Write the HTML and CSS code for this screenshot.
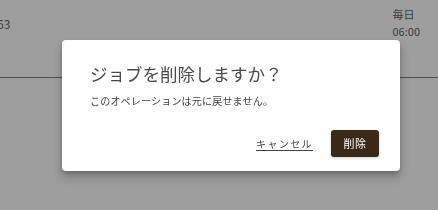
FILE: index.html
```html
<!DOCTYPE html>
<html lang="ja">
<head>
    <meta charset="UTF-8">
    <meta name="viewport" content="width=device-width, initial-scale=1.0">
    <title>ジョブ一覧</title>
    <link rel="stylesheet" href="styles.css">
</head>
<body>

<div class="job-row">
    <div class="cell cell-id">63</div>
    <div class="cell cell-schedule">
        <span>毎日</span>
        <span>06:00</span>
    </div>
</div>

<div class="overlay">
    <div class="dialog">
        <h2 class="dialog-title">ジョブを削除しますか？</h2>
        <p class="dialog-text">このオペレーションは元に戻せません。</p>
        <div class="dialog-actions">
            <button class="btn-link">キャンセル</button>
            <button class="btn-danger">削除</button>
        </div>
    </div>
</div>

</body>
</html>
```

FILE: styles.css
```css
body {
    font-family: "Noto Sans CJK JP", "Noto Sans", sans-serif;
    margin: 0;
    padding: 0;
    background-color: #9e9e9e;
    height: 210px;
    overflow: hidden;
}
.job-row {
    display: flex;
    justify-content: space-between;
    height: 77px;
    border-bottom: 1px solid #505050;
    color: #3c3c3c;
    font-size: 11px;
}
.cell-id {
    margin-left: -3px;
    padding-top: 15px;
    font-size: 12px;
}
.cell-schedule {
    display: flex;
    flex-direction: column;
    gap: 1px;
    padding-top: 6px;
    padding-right: 18px;
    line-height: 16px;
}
.overlay {
    position: fixed;
    top: 0;
    left: 0;
    width: 100%;
    height: 100%;
    display: flex;
    align-items: center;
    justify-content: center;
    padding-left: 24px;
    box-sizing: border-box;
}
.dialog {
    width: 338px;
    height: 131px;
    box-sizing: border-box;
    background-color: #fff;
    border-radius: 4px;
    box-shadow: 0 6px 10px rgba(0, 0, 0, 0.25), 0 2px 4px rgba(0, 0, 0, 0.15);
    padding: 22px 21px 14px 28px;
    display: flex;
    flex-direction: column;
}
.dialog-title {
    margin: 0;
    font-size: 17.5px;
    font-weight: 400;
    line-height: 24px;
    color: #4a4a4a;
}
.dialog-text {
    margin: 7px 0 0;
    font-size: 10px;
    letter-spacing: 0.2px;
    line-height: 16px;
    color: #444;
}
.dialog-actions {
    margin-top: auto;
    display: flex;
    justify-content: flex-end;
    align-items: center;
    gap: 18px;
}
.btn-link {
    font-family: inherit;
    background: none;
    border: none;
    padding: 0;
    font-size: 10px;
    letter-spacing: 1.4px;
    color: #444;
    text-decoration: underline;
    text-underline-offset: 2px;
    cursor: pointer;
}
.btn-danger {
    font-family: inherit;
    width: 48px;
    height: 27px;
    border: none;
    border-radius: 3px;
    background-color: #3b2816;
    color: #fff;
    font-size: 11px;
    letter-spacing: 0.5px;
    box-shadow: 0 1px 3px rgba(0, 0, 0, 0.2);
    cursor: pointer;
}
```
